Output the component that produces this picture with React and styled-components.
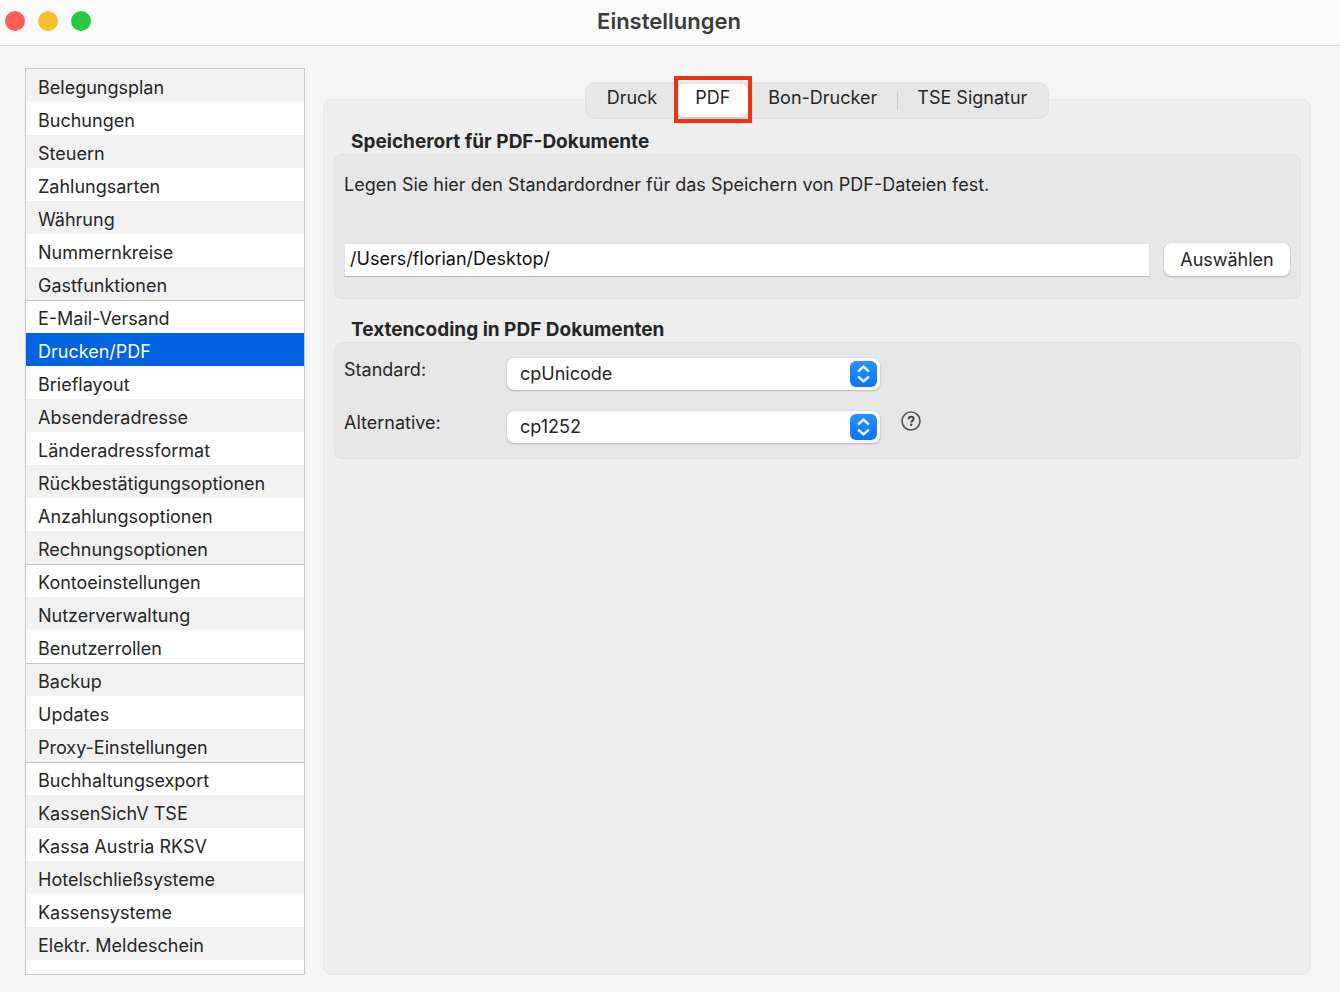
import React, { useState } from "react";
import styled, { createGlobalStyle } from "styled-components";

const GlobalStyle = createGlobalStyle`
	*,
	*::before,
	*::after {
		box-sizing: border-box;
	}

	body {
		margin: 0;
		background-color: #f5f5f5;
		color: #262626;
		font-family: Inter, "Liberation Sans", sans-serif;
		font-size: 18px;
		line-height: 24px;
	}

	button,
	input,
	select {
		color: inherit;
		font: inherit;
	}
`;

const Window = styled.div`
	display: flex;
	flex-direction: column;
	min-height: 100vh;
`;

const TitleBar = styled.header`
	display: grid;
	grid-template-columns: 1fr auto 1fr;
	align-items: center;
	height: 46px;
	padding: 0 7px 4px 5px;
	background-color: #fafafa;
	border-bottom: 1px solid #dcdcdc;

	h1 {
		margin: 0;
		color: #3c3c3c;
		font-size: 22px;
		font-weight: 600;
	}
`;

const TrafficLights = styled.div`
	display: flex;
	gap: 13px;
`;

const Light = styled.button`
	width: 20px;
	height: 20px;
	padding: 0;
	border: 0;
	border-radius: 50%;
	background-color: ${({ $color }) => $color};
`;

const Content = styled.div`
	display: flex;
	flex: 1;
	gap: 18px;
	padding: 22px 29px 17px 25px;
`;

const Sidebar = styled.nav`
	flex: 0 0 280px;
	background-color: #ffffff;
	border: 1px solid #c9c9c9;

	ul {
		margin: 0;
		padding: 0;
		list-style: none;
	}
`;

const SidebarItem = styled.li`
	a {
		display: block;
		height: 33px;
		padding: ${({ $divided }) => ($divided ? "6px 12px 0" : "7px 12px 0")};
		border-top: ${({ $divided }) => ($divided ? "1px solid #c4c4c4" : "0")};
		color: inherit;
		text-decoration: none;
	}

	&:nth-child(odd) a {
		background-color: #f2f2f2;
	}

	a[aria-current="page"] {
		background-color: #0063e1;
		color: #ffffff;
	}
`;

const Main = styled.main`
	display: flex;
	flex: 1;
	flex-direction: column;
	min-width: 0;
	padding-top: 14px;
`;

const TabBar = styled.div`
	z-index: 1;
	display: flex;
	align-self: center;
	height: 37px;
	margin-bottom: -20px;
	padding: 1px;
	background-color: #e7e7e7;
	border: 1px solid #e0e0e0;
	border-radius: 10px;
`;

const Tab = styled.button`
	position: relative;
	padding: 0 20px 6px;
	background-color: transparent;
	border: 0;
	border-radius: 7px;

	&[aria-selected="true"] {
		padding: 0 18px 6px;
		background-color: #ffffff;
		box-shadow: 0 1px 2px rgba(0, 0, 0, 0.2);
	}

	/* red frame that calls out the active tab */
	&[aria-selected="true"]::after {
		content: "";
		position: absolute;
		inset: -8px -4px -6px -3px;
		border: 4px solid #ee3214;
	}

	&:last-child::before {
		content: "";
		position: absolute;
		top: 8px;
		left: 0;
		width: 1px;
		height: 18px;
		background-color: #cfcfcf;
	}
`;

const Panel = styled.div`
	flex: 1;
	padding: 30px 9px 20px 10px;
	background-color: #eeeeee;
	border: 1px solid #e8e8e8;
	border-radius: 9px;
`;

const Group = styled.section`
	& + & {
		margin-top: 19px;
	}

	h2 {
		margin: 0;
		padding-left: 17px;
		font-size: 19px;
		font-weight: 700;
		line-height: 24px;
	}
`;

const GroupBox = styled.div`
	display: flex;
	flex-direction: column;
	gap: ${({ $gap }) => $gap}px;
	padding: ${({ $padding }) => $padding};
	background-color: #e7e7e7;
	border: 1px solid #e0e0e0;
	border-radius: 8px;

	p {
		margin: 0;
	}
`;

const PathRow = styled.div`
	display: flex;
	gap: 14px;
`;

const PathInput = styled.input`
	flex: 1;
	min-width: 0;
	height: 34px;
	padding: 0 5px 4px;
	background-color: #ffffff;
	border: 1px solid #e2e2e2;
	border-bottom-color: #b4b4b4;
	border-radius: 0;
	color: #111111;
	outline: 0;
`;

const PushButton = styled.button`
	width: 126px;
	height: 33px;
	padding: 0;
	background-color: #ffffff;
	border: 0;
	border-radius: 7px;
	box-shadow: 0 0 1px rgba(0, 0, 0, 0.25), 0 1px 2px rgba(0, 0, 0, 0.2);
`;

const FieldRow = styled.div`
	display: flex;
	align-items: flex-start;

	label {
		width: 163px;
	}
`;

const SelectWrap = styled.div`
	display: grid;
	width: 373px;
	margin-right: 21px;

	select,
	svg {
		grid-area: 1 / 1;
	}

	select {
		appearance: none;
		height: 32px;
		padding: 0 44px 0 13px;
		background-color: #ffffff;
		border: 0;
		border-radius: 7px;
		box-shadow: 0 0 1px rgba(0, 0, 0, 0.25), 0 1px 2px rgba(0, 0, 0, 0.2);
	}

	svg {
		align-self: center;
		justify-self: end;
		margin-right: 3px;
		pointer-events: none;
	}
`;

const HelpButton = styled.button`
	display: flex;
	padding: 0;
	background-color: transparent;
	border: 0;
`;

const sidebarItems = [
	{ label: "Belegungsplan" },
	{ label: "Buchungen" },
	{ label: "Steuern" },
	{ label: "Zahlungsarten" },
	{ label: "Währung" },
	{ label: "Nummernkreise" },
	{ label: "Gastfunktionen" },
	{ label: "E-Mail-Versand", divided: true },
	{ label: "Drucken/PDF" },
	{ label: "Brieflayout" },
	{ label: "Absenderadresse" },
	{ label: "Länderadressformat" },
	{ label: "Rückbestätigungsoptionen" },
	{ label: "Anzahlungsoptionen" },
	{ label: "Rechnungsoptionen" },
	{ label: "Kontoeinstellungen", divided: true },
	{ label: "Nutzerverwaltung" },
	{ label: "Benutzerrollen" },
	{ label: "Backup", divided: true },
	{ label: "Updates" },
	{ label: "Proxy-Einstellungen" },
	{ label: "Buchhaltungsexport", divided: true },
	{ label: "KassenSichV TSE" },
	{ label: "Kassa Austria RKSV" },
	{ label: "Hotelschließsysteme" },
	{ label: "Kassensysteme" },
	{ label: "Elektr. Meldeschein" },
];

const tabs = ["Druck", "PDF", "Bon-Drucker", "TSE Signatur"];

const encodings = ["cpUnicode", "cp1252"];

const EncodingSelect = ({ id, value }) => (
	<SelectWrap>
		<select id={id} defaultValue={value}>
			{encodings.map((encoding) => (
				<option key={encoding}>{encoding}</option>
			))}
		</select>
		<svg width="27" height="26" viewBox="0 0 27 26" aria-hidden="true">
			<defs>
				<linearGradient id={`${id}-blue`} x1="0" y1="0" x2="0" y2="1">
					<stop offset="0" stopColor="#2a92ff" />
					<stop offset="1" stopColor="#0a74fb" />
				</linearGradient>
			</defs>
			<rect width="27" height="26" rx="6" fill={`url(#${id}-blue)`} />
			<path
				d="M8.8 9.800 13.500 5.600l4.700 4.200M8.800 16.200l4.700 4.200 4.700-4.200"
				fill="none"
				stroke="#ffffff"
				strokeWidth="2.4"
				strokeLinecap="round"
				strokeLinejoin="round"
			/>
		</svg>
	</SelectWrap>
);

const App = () => {
	const [page, setPage] = useState("Drucken/PDF");
	const [tab, setTab] = useState("PDF");

	return (
		<Window>
			<GlobalStyle />
			<TitleBar>
				<TrafficLights>
					<Light $color="#ff5f57" aria-label="Schließen" />
					<Light $color="#febc2e" aria-label="Minimieren" />
					<Light $color="#28c840" aria-label="Vergrößern" />
				</TrafficLights>
				<h1>Einstellungen</h1>
			</TitleBar>
			<Content>
				<Sidebar>
					<ul>
						{sidebarItems.map(({ label, divided }) => (
							<SidebarItem key={label} $divided={divided}>
								<a
									href="#"
									aria-current={label === page ? "page" : undefined}
									onClick={() => setPage(label)}
								>
									{label}
								</a>
							</SidebarItem>
						))}
					</ul>
				</Sidebar>
				<Main>
					<TabBar role="tablist">
						{tabs.map((name) => (
							<Tab
								key={name}
								role="tab"
								aria-selected={name === tab}
								onClick={() => setTab(name)}
							>
								{name}
							</Tab>
						))}
					</TabBar>
					<Panel role="tabpanel">
						<Group>
							<h2>Speicherort für PDF-Dokumente</h2>
							<GroupBox $gap={46} $padding="18px 10px 21px 9px">
								<p id="path-hint">
									Legen Sie hier den Standardordner für das Speichern von
									PDF-Dateien fest.
								</p>
								<PathRow>
									<PathInput
										type="text"
										aria-labelledby="path-hint"
										defaultValue="/Users/florian/Desktop/"
									/>
									<PushButton>Auswählen</PushButton>
								</PathRow>
							</GroupBox>
						</Group>
						<Group>
							<h2>Textencoding in PDF Dokumenten</h2>
							<GroupBox $gap={21} $padding="15px 10px 15px 9px">
								<FieldRow>
									<label htmlFor="standard">Standard:</label>
									<EncodingSelect id="standard" value="cpUnicode" />
								</FieldRow>
								<FieldRow>
									<label htmlFor="alternative">Alternative:</label>
									<EncodingSelect id="alternative" value="cp1252" />
									<HelpButton aria-label="Hilfe">
										<svg width="20" height="20" viewBox="0 0 20 20">
											<circle
												cx="10"
												cy="10"
												r="9"
												fill="none"
												stroke="#555555"
												strokeWidth="1.6"
											/>
											<path
												d="M7.6 8.2c0-1.5 1-2.4 2.5-2.4s2.5.9 2.5 2.1c0 1.7-2.3 1.8-2.3 3.7"
												fill="none"
												stroke="#444444"
												strokeWidth="2"
											/>
											<circle cx="10.2" cy="13.8" r="1.2" fill="#444444" />
										</svg>
									</HelpButton>
								</FieldRow>
							</GroupBox>
						</Group>
					</Panel>
				</Main>
			</Content>
		</Window>
	);
};

export default App;
